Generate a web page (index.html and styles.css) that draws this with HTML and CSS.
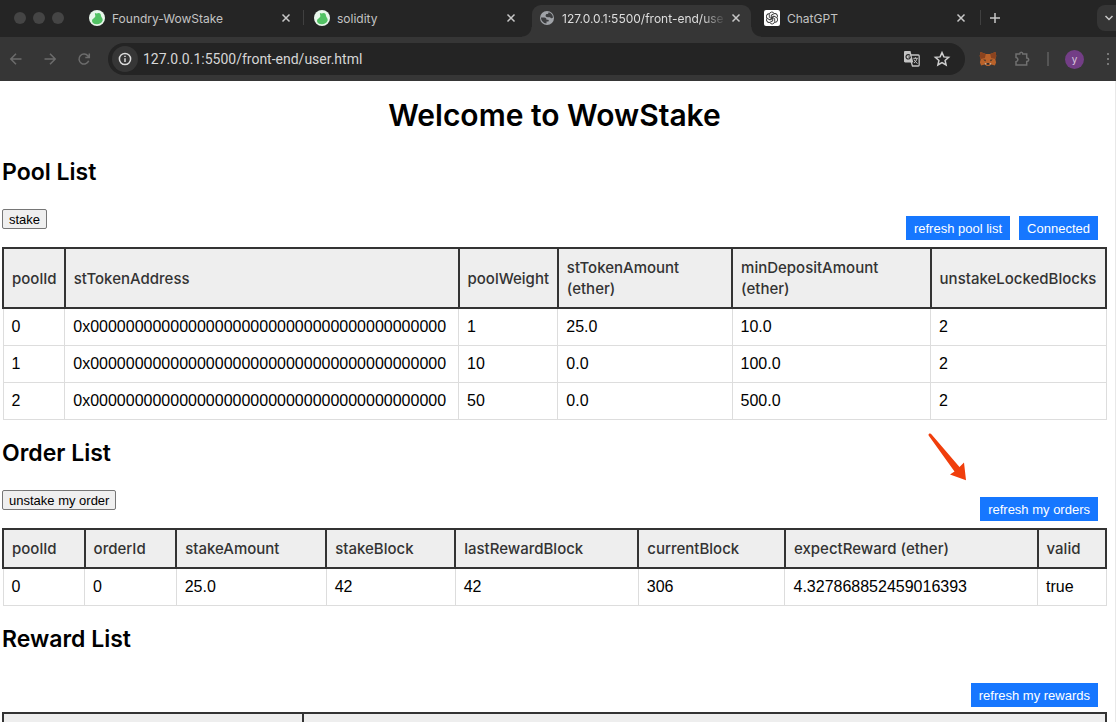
FILE: index.html
```
<!DOCTYPE html>
<html lang="en">
<head>
<meta charset="utf-8">
<title>WowStake</title>
<link rel="stylesheet" href="styles.css">
</head>
<body>
<div class="window">
  <header class="browser">
    <div class="tabstrip">
      <div class="lights"><i></i><i></i><i></i></div>
      <div class="tab">
        <svg class="favicon" viewBox="0 0 16 16"><circle cx="8" cy="8" r="8" fill="#e9f7ec"/><path d="M6 3C7.500 4 9 2.800 10.500 3.200c1.500.5 1.300 1.900 1.500 2.800.6 1.600 2.200 2.800 1.600 4.800-.9 2.500-3.400 3.500-5.800 3.400-3-.1-5-1.500-4.800-3.700.2-1.700 2.800-2.600 3.300-4C6.600 5.200 5.500 4.200 6 3z" fill="#52c264"/></svg>
        <span class="tab-title">Foundry-WowStake</span>
        <button class="icon-btn" aria-label="Close tab"><svg width="10" height="10" viewBox="0 0 10 10"><path d="M1.500 1.500l7 7M8.500 1.500l-7 7"/></svg></button>
      </div>
      <div class="tab tab-divided">
        <svg class="favicon" viewBox="0 0 16 16"><circle cx="8" cy="8" r="8" fill="#e9f7ec"/><path d="M6 3C7.500 4 9 2.800 10.500 3.200c1.500.5 1.300 1.900 1.500 2.800.6 1.600 2.200 2.800 1.600 4.800-.9 2.500-3.400 3.500-5.800 3.400-3-.1-5-1.500-4.800-3.700.2-1.700 2.800-2.600 3.300-4C6.600 5.200 5.500 4.200 6 3z" fill="#52c264"/></svg>
        <span class="tab-title">solidity</span>
        <button class="icon-btn" aria-label="Close tab"><svg width="10" height="10" viewBox="0 0 10 10"><path d="M1.500 1.500l7 7M8.500 1.500l-7 7"/></svg></button>
      </div>
      <div class="tab tab-active">
        <svg class="favicon" viewBox="0 0 16 16"><circle cx="8" cy="8" r="7" fill="#a0a3a8"/><path d="M2 7.500h3.200c1.600 0 2.300 1 2.300 2.200h1.600c.8 0 1 1.600 0 1.700H7.500v2.100C4.300 13.200 2 10.800 2 7.500zM9.600 2.200c2.600.7 4.300 2.900 4.400 5.400-.9 1.200-2.500.8-2.800-.4H8.600c-1.300 0-2-.6-2-1.700 0-.9.600-1.500 1.500-1.500.9 0 1.500-.7 1.500-1.800z" fill="#3c3d3f"/></svg>
        <span class="tab-title">127.0.0.1:5500/front-end/use</span>
        <button class="icon-btn" aria-label="Close tab"><svg width="10" height="10" viewBox="0 0 10 10"><path d="M1.500 1.500l7 7M8.500 1.500l-7 7"/></svg></button>
      </div>
      <div class="tab">
        <svg class="favicon" viewBox="0 0 16 16"><rect width="16" height="16" rx="2" fill="#fff"/><g fill="none" stroke="#333" stroke-width=".9"><path id="petal" d="M8 8.900L5.300 7.300V4.600a2.600 2.600 0 0 1 4.900-1.200"/><use href="#petal" transform="rotate(60 8 8)"/><use href="#petal" transform="rotate(120 8 8)"/><use href="#petal" transform="rotate(180 8 8)"/><use href="#petal" transform="rotate(240 8 8)"/><use href="#petal" transform="rotate(300 8 8)"/></g></svg>
        <span class="tab-title">ChatGPT</span>
        <button class="icon-btn" aria-label="Close tab"><svg width="10" height="10" viewBox="0 0 10 10"><path d="M1.500 1.500l7 7M8.500 1.500l-7 7"/></svg></button>
      </div>
      <span class="strip-rule"></span>
      <button class="icon-btn new-tab" aria-label="New tab"><svg width="12" height="12" viewBox="0 0 12 12"><path d="M6 1v10M1 6h10"/></svg></button>
      <button class="tab-search" aria-label="Search tabs"><svg width="10" height="8" viewBox="0 0 10 8"><path d="M1.500 2L5 5.500 8.500 2"/></svg></button>
    </div>
    <div class="toolbar">
      <div class="nav">
        <button class="nav-btn" aria-label="Back"><svg width="16" height="16" viewBox="0 0 16 16"><path d="M13.500 8H3M8 2.800L2.800 8 8 13.200"/></svg></button>
        <button class="nav-btn" aria-label="Forward"><svg width="16" height="16" viewBox="0 0 16 16"><path d="M2.500 8H13M8 2.800L13.200 8 8 13.200"/></svg></button>
        <button class="nav-btn" aria-label="Reload"><svg width="16" height="16" viewBox="0 0 16 16"><path d="M12.700 9.800A5 5 0 1 1 12 5l1.300 1.400M13.300 2.500v4h-4"/></svg></button>
      </div>
      <div class="omnibox">
        <button class="site-info" aria-label="Site information"><svg width="14" height="14" viewBox="0 0 14 14"><circle cx="7" cy="7" r="5.600"/><path d="M7 6.300V10M7 3.800v1.300"/></svg></button>
        <input class="url" type="text" aria-label="Address" value="127.0.0.1:5500/front-end/user.html">
        <button class="omni-btn" aria-label="Translate"><svg width="18" height="18" viewBox="0 0 18 18"><path d="M8 5h7.200c.6 0 1 .4 1 1v9c0 .6-.4 1-1 1H9.500L8.200 12" fill="none" stroke="#c4c4c4" stroke-width="1.300"/><path d="M2.200 1h5.300l2.800 11.500H2.200c-.7 0-1.200-.5-1.200-1.200V2.200C1 1.500 1.500 1 2.200 1z" fill="#c4c4c4"/><path d="M7 5.500A2.200 2.200 0 1 0 7.400 7H5.400" fill="none" stroke="#2a2a2a" stroke-width="1.200"/><path d="M10.300 8.300h4.500M12.500 7.300v1M14 8.500c-.5 2-1.700 3.500-3 4.500M11 9.500c.8 1.800 2 3 3.500 4" fill="none" stroke="#c4c4c4"/></svg></button>
        <button class="omni-btn" aria-label="Bookmark"><svg width="18" height="18" viewBox="0 0 18 18"><path d="M9 2.600l1.900 4.300 4.700.4-3.500 3.100 1 4.600L9 12.600 4.900 15l1-4.600-3.500-3.100 4.700-.4z" fill="none" stroke="#d0d0d0" stroke-width="1.500"/></svg></button>
      </div>
      <div class="extensions">
        <button class="ext-btn" aria-label="MetaMask"><svg width="18" height="16" viewBox="0 0 18 16"><path d="M1.500 1l5.300 2h4.400l5.300-2 .8 4-1 3.200.8 3.200-1.200 3-3.600-.8-2 1.400H7.700l-2-1.400-3.600.8-1.200-3 .8-3.200-1-3.200z" fill="#b9622a"/><path d="M1.500 1l5.300 2-.9 4L1.700 8l-1-3zM16.500 1l-5.300 2 .9 4 4.200 1 1-3z" fill="#8a431f"/><path d="M4.200 8.500l2.600.3-.3 1.600zM13.800 8.500l-2.600.3.300 1.600z" fill="#35302e"/><path d="M7.500 12h3l.3 1.800H7.200z" fill="#332c2a"/><path d="M5.500 12l2 .2-.3 2zM12.500 12l-2 .2.300 2z" fill="#c9b5a4"/></svg></button>
        <button class="ext-btn" aria-label="Extensions"><svg width="18" height="18" viewBox="0 0 18 18"><path d="M3 4h3.700c0-2.400 3.100-2.400 3.100 0h3.900v4c2.600.1 2.600 3.400 0 3.500V15H3v-3.300c2.600-.6 2.600-3.700 0-4.200z" fill="none" stroke="#707070" stroke-width="1.500"/></svg></button>
        <span class="rule"></span>
        <button class="avatar" aria-label="Profile">y</button>
        <button class="menu" aria-label="Menu"><i></i><i></i><i></i></button>
      </div>
    </div>
  </header>

  <main class="page">
    <h1>Welcome to WowStake</h1>

    <section>
      <h2>Pool List</h2>
      <div class="actions">
        <button class="plain">stake</button>
        <div class="primary-group">
          <button class="primary">refresh pool list</button>
          <button class="primary">Connected</button>
        </div>
      </div>
      <table class="pools">
        <colgroup><col><col><col><col><col><col></colgroup>
        <thead>
          <tr><th>poolId</th><th>stTokenAddress</th><th>poolWeight</th><th>stTokenAmount<br>(ether)</th><th>minDepositAmount<br>(ether)</th><th>unstakeLockedBlocks</th></tr>
        </thead>
        <tbody>
          <tr><td>0</td><td>0x0000000000000000000000000000000000000000</td><td>1</td><td>25.0</td><td>10.0</td><td>2</td></tr>
          <tr><td>1</td><td>0x0000000000000000000000000000000000000000</td><td>10</td><td>0.0</td><td>100.0</td><td>2</td></tr>
          <tr><td>2</td><td>0x0000000000000000000000000000000000000000</td><td>50</td><td>0.0</td><td>500.0</td><td>2</td></tr>
        </tbody>
      </table>
    </section>

    <section>
      <h2>Order List</h2>
      <div class="actions">
        <button class="plain">unstake my order</button>
        <div class="primary-group">
          <svg class="pointer" width="40" height="48" viewBox="0 0 40 48"><path d="M1 .8C2 .2 3 .6 3.600 1.400L31.500 34l4.500-4.500 2 17.700L22 41.500l4.500-3L.8 2.800C.4 2 .4 1.300 1 .8z" fill="#f03e0c"/></svg>
          <button class="primary">refresh my orders</button>
        </div>
      </div>
      <table class="orders">
        <colgroup><col><col><col><col><col><col><col><col></colgroup>
        <thead>
          <tr><th>poolId</th><th>orderId</th><th>stakeAmount</th><th>stakeBlock</th><th>lastRewardBlock</th><th>currentBlock</th><th>expectReward (ether)</th><th>valid</th></tr>
        </thead>
        <tbody>
          <tr><td>0</td><td>0</td><td>25.0</td><td>42</td><td>42</td><td>306</td><td>4.327868852459016393</td><td>true</td></tr>
        </tbody>
      </table>
    </section>

    <section>
      <h2>Reward List</h2>
      <div class="actions actions-tight">
        <div class="primary-group">
          <button class="primary">refresh my rewards</button>
        </div>
      </div>
      <table class="rewards">
        <colgroup><col><col></colgroup>
        <thead>
          <tr><th>&nbsp;</th><th>&nbsp;</th></tr>
        </thead>
      </table>
    </section>
  </main>
</div>
</body>
</html>
```
FILE: styles.css
```
* { box-sizing: border-box; }

body {
  margin: 0;
  background: #fff;
  color: #000;
  font-family: Inter, "Liberation Sans", sans-serif;
}

button { font-family: inherit; }

.window {
  display: flex;
  flex-direction: column;
  height: 100vh;
  padding-bottom: 5px;
  overflow: hidden;
}

/* Browser frame */
.browser { flex: none; background: #252525; }

.browser button {
  display: flex;
  align-items: center;
  justify-content: center;
  flex: none;
  padding: 0;
  border: 0;
  background: none;
}

.browser button svg { display: block; }

.tabstrip {
  display: flex;
  align-items: stretch;
  height: 37px;
  padding-top: 5px;
  overflow: hidden;
}

.lights {
  display: flex;
  flex: none;
  align-items: center;
  gap: 7px;
  width: 80px;
  padding: 0 0 6px 14px;
}

.lights i {
  width: 12px;
  height: 12px;
  border-radius: 50%;
  background: #454545;
}

.tab {
  position: relative;
  display: flex;
  flex: 0 1 225px;
  align-items: center;
  gap: 7px;
  min-width: 0;
  padding: 0 11px 6px 9px;
  color: #c3c3c3;
  font-size: 12px;
}

.favicon { flex: none; width: 16px; height: 16px; }

.tab-title {
  flex: 1;
  overflow: hidden;
  white-space: nowrap;
}

.browser .icon-btn { width: 16px; }

.icon-btn path, .tab-search path {
  fill: none;
  stroke: #c8c8c8;
  stroke-width: 1.5px;
}

.tab-divided::before {
  content: "";
  position: absolute;
  left: -2px;
  top: 5px;
  width: 1px;
  height: 15px;
  background: #404040;
}

.tab-active {
  flex-basis: 219px;
  margin: 0 4px 0 2px;
  padding: 0 7px 6px;
  background: #363636;
  border-radius: 9px 9px 0 0;
  color: #dedede;
}

.tab-active .tab-title {
  margin-right: -5px;
  -webkit-mask-image: linear-gradient(90deg, #000 85%, transparent);
  mask-image: linear-gradient(90deg, #000 85%, transparent);
}

.tab-active::before, .tab-active::after {
  content: "";
  position: absolute;
  bottom: 0;
  width: 10px;
  height: 10px;
}

.tab-active::before {
  left: -10px;
  background: radial-gradient(circle at 0 0, transparent 9px, #363636 10px);
}

.tab-active::after {
  right: -10px;
  background: radial-gradient(circle at 100% 0, transparent 9px, #363636 10px);
}

.strip-rule {
  flex: none;
  width: 1px;
  height: 15px;
  margin-top: 5px;
  background: #404040;
}

.icon-btn { height: 16px; }

.new-tab { margin: 5px 0 0 6px; }

.browser .tab-search {
  width: 26px;
  height: 26px;
  margin: 0 -7px 0 auto;
  padding-right: 2px;
  border-radius: 8px;
  background: #353535;
}

.toolbar {
  display: flex;
  align-items: center;
  height: 44px;
  background: #363636;
}

.nav {
  display: flex;
  flex: none;
  gap: 18px;
  width: 108px;
  padding-left: 8px;
}

.nav-btn path {
  fill: none;
  stroke: #6c6c6c;
  stroke-width: 1.5px;
}

.omnibox {
  display: flex;
  flex: 1;
  align-items: center;
  gap: 12px;
  height: 32px;
  min-width: 0;
  padding: 0 14px 0 4px;
  border-radius: 16px;
  background: #242424;
}

.browser .site-info {
  width: 26px;
  height: 26px;
  border-radius: 50%;
  background: #363636;
}

.site-info svg { fill: none; stroke: #dcdcdc; stroke-width: 1.5px; }

.url {
  flex: 1;
  min-width: 0;
  margin-left: -7px;
  padding: 0;
  border: 0;
  outline: 0;
  background: none;
  color: #d6d6d6;
  font: 14px Roboto, sans-serif;
}

.extensions {
  display: flex;
  flex: none;
  align-items: center;
  justify-content: flex-end;
  gap: 16px;
  width: 151px;
  padding-right: 6px;
}

.rule { width: 2px; height: 14px; background: #555; }

.browser .avatar {
  width: 19px;
  height: 19px;
  border-radius: 50%;
  background: #733e86;
  color: #d6c8dc;
  font-size: 10px;
}

.browser .menu { flex-direction: column; gap: 3px; width: 4px; margin-left: 6px; }

.menu i { width: 2px; height: 2px; background: #777; }

/* Page */
.page {
  flex: 1;
  min-height: 0;
  padding: 0 8px 0 2px;
  border-right: 1px solid #e8e8e8;
  overflow: hidden;
}

h1, h2 { font-weight: 600; }

h1 {
  margin: 14px 0 23px;
  font-size: 30px;
  line-height: 40px;
  text-align: center;
}

h2 {
  margin: 19px 0 23px;
  font-size: 23px;
  line-height: 28px;
}

.actions {
  display: flex;
  align-items: flex-start;
  height: 31px;
  margin-bottom: 7px;
}

.actions-tight { margin-bottom: 5px; }

.plain {
  height: 20px;
  padding: 0 6px;
  border: 1px solid #767676;
  border-radius: 2px;
  background: #efefef;
  color: #000;
  font: 13px "Liberation Sans", sans-serif;
}

.primary-group {
  position: relative;
  display: flex;
  gap: 9px;
  margin: 7px 9px 0 auto;
}

.primary {
  height: 24px;
  padding: 0 8px;
  border: 0;
  background: #1677ff;
  color: #fff;
  font: 13px "Liberation Sans", sans-serif;
}

.pointer {
  position: absolute;
  right: 130px;
  bottom: 40px;
}

table {
  width: 100%;
  border-collapse: collapse;
  table-layout: fixed;
  line-height: 20px;
}

th, td {
  padding: 8px;
  text-align: left;
  white-space: nowrap;
}

th {
  border: 2px solid #333;
  background: #eee;
  color: #333;
  font-size: 15px;
  font-weight: 500;
  line-height: 21px;
}

td {
  border: 1px solid #ddd;
  font-family: "Liberation Sans", sans-serif;
  font-size: 16px;
}

.pools col:nth-child(1) { width: 5.6%; }
.pools col:nth-child(2) { width: 35.7%; }
.pools col:nth-child(3) { width: 9%; }
.pools col:nth-child(4) { width: 15.8%; }
.pools col:nth-child(5) { width: 18%; }
.pools col:nth-child(6) { width: 15.9%; }

.orders col:nth-child(1) { width: 7.4%; }
.orders col:nth-child(2) { width: 8.3%; }
.orders col:nth-child(3) { width: 13.6%; }
.orders col:nth-child(4) { width: 11.7%; }
.orders col:nth-child(5) { width: 16.6%; }
.orders col:nth-child(6) { width: 13.3%; }
.orders col:nth-child(7) { width: 22.9%; }
.orders col:nth-child(8) { width: 6.2%; }

.rewards col:nth-child(1) { width: 27.2%; }
```
